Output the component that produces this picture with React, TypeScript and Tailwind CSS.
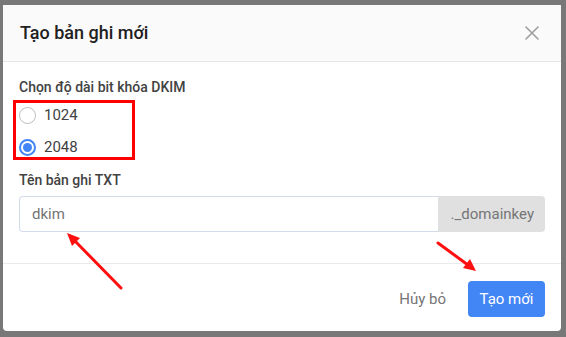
import { useState } from "react";

function CloseIcon() {
  return (
    <svg width="16" height="16" viewBox="0 0 16 16" fill="none" aria-hidden>
      <path d="M2 2l12 12M14 2L2 14" stroke="#9e9e9e" strokeWidth="1.6" strokeLinecap="round" />
    </svg>
  );
}

function Radio({ checked }: { checked: boolean }) {
  return checked ? (
    <span className="w-[17px] h-[17px] rounded-full border-[2px] border-[#4285f4] flex items-center justify-center">
      <span className="w-[9px] h-[9px] rounded-full bg-[#4285f4]" />
    </span>
  ) : (
    <span className="w-[17px] h-[17px] rounded-full border border-[#bdbdbd] bg-white" />
  );
}

export default function App() {
  const [bits, setBits] = useState("2048");

  return (
    <div
      className="relative w-[566px] h-[337px] bg-[#787878] pt-[5px] pl-[3px] overflow-hidden"
      style={{ fontFamily: "Roboto, 'Noto Sans', sans-serif" }}
    >
      <div className="w-[558px] h-[326px] bg-white rounded-b-[4px] flex flex-col">
        {/* Header */}
        <div className="h-[57px] bg-[#fafafa] border-b border-[#e6e6e6] flex items-center justify-between pl-[17px] pr-[21px] shrink-0">
          <h2 className="text-[18px] font-medium text-[#212121] leading-none">Tạo bản ghi mới</h2>
          <CloseIcon />
        </div>

        {/* Body */}
        <div className="px-[16px] pt-[15px] h-[202px] border-b border-[#eaeaea] shrink-0">
          <div className="text-[14px] font-medium text-[#424242] leading-[20px]">Chọn độ dài bit khóa DKIM</div>
          <div className="relative mt-[2px]">
            {["1024", "2048"].map((b) => (
              <div
                key={b}
                className="h-[32px] flex items-center gap-[8px] cursor-pointer"
                onClick={() => setBits(b)}
              >
                <Radio checked={bits === b} />
                <span className="text-[15px] text-[#424242]">{b}</span>
              </div>
            ))}
            <div className="absolute left-[-6px] top-[1px] w-[122px] h-[60px] border-[3px] border-[#ff0000] pointer-events-none" />
          </div>
          <div className="mt-[7px] text-[14px] font-medium text-[#424242] leading-[20px]">Tên bản ghi TXT</div>
          <div className="mt-[6px] flex h-[36px]">
            <input
              defaultValue="dkim"
              className="flex-1 min-w-0 border border-[#d3dbea] border-r-0 rounded-l-[4px] px-[12px] text-[15px] text-[#757575] outline-none bg-white"
            />
            <div className="w-[107px] bg-[#e0e0e0] rounded-r-[4px] flex items-center justify-end pr-[11px] text-[15px] text-[#757575]">
              ._domainkey
            </div>
          </div>
        </div>

        {/* Footer */}
        <div className="flex-1 flex items-start justify-end gap-[22px] px-[16px] pt-[17px]">
          <button className="h-[36px] text-[15px] text-[#757575]">Hủy bỏ</button>
          <button className="h-[36px] w-[77px] rounded-[4px] bg-[#4285f4] text-white text-[15px]">Tạo mới</button>
        </div>
      </div>

      {/* Annotation arrows */}
      <svg className="absolute inset-0 pointer-events-none" width="566" height="337" viewBox="0 0 566 337">
        <line x1="121" y1="288" x2="74" y2="240" stroke="#ff1010" strokeWidth="3" strokeLinecap="round" />
        <polygon points="67,233 80,238 72,246" fill="#ff1010" />
        <line x1="438" y1="243" x2="468" y2="265" stroke="#ff1010" strokeWidth="3" strokeLinecap="round" />
        <polygon points="476,271 463,268 470,259" fill="#ff1010" />
      </svg>
    </div>
  );
}
